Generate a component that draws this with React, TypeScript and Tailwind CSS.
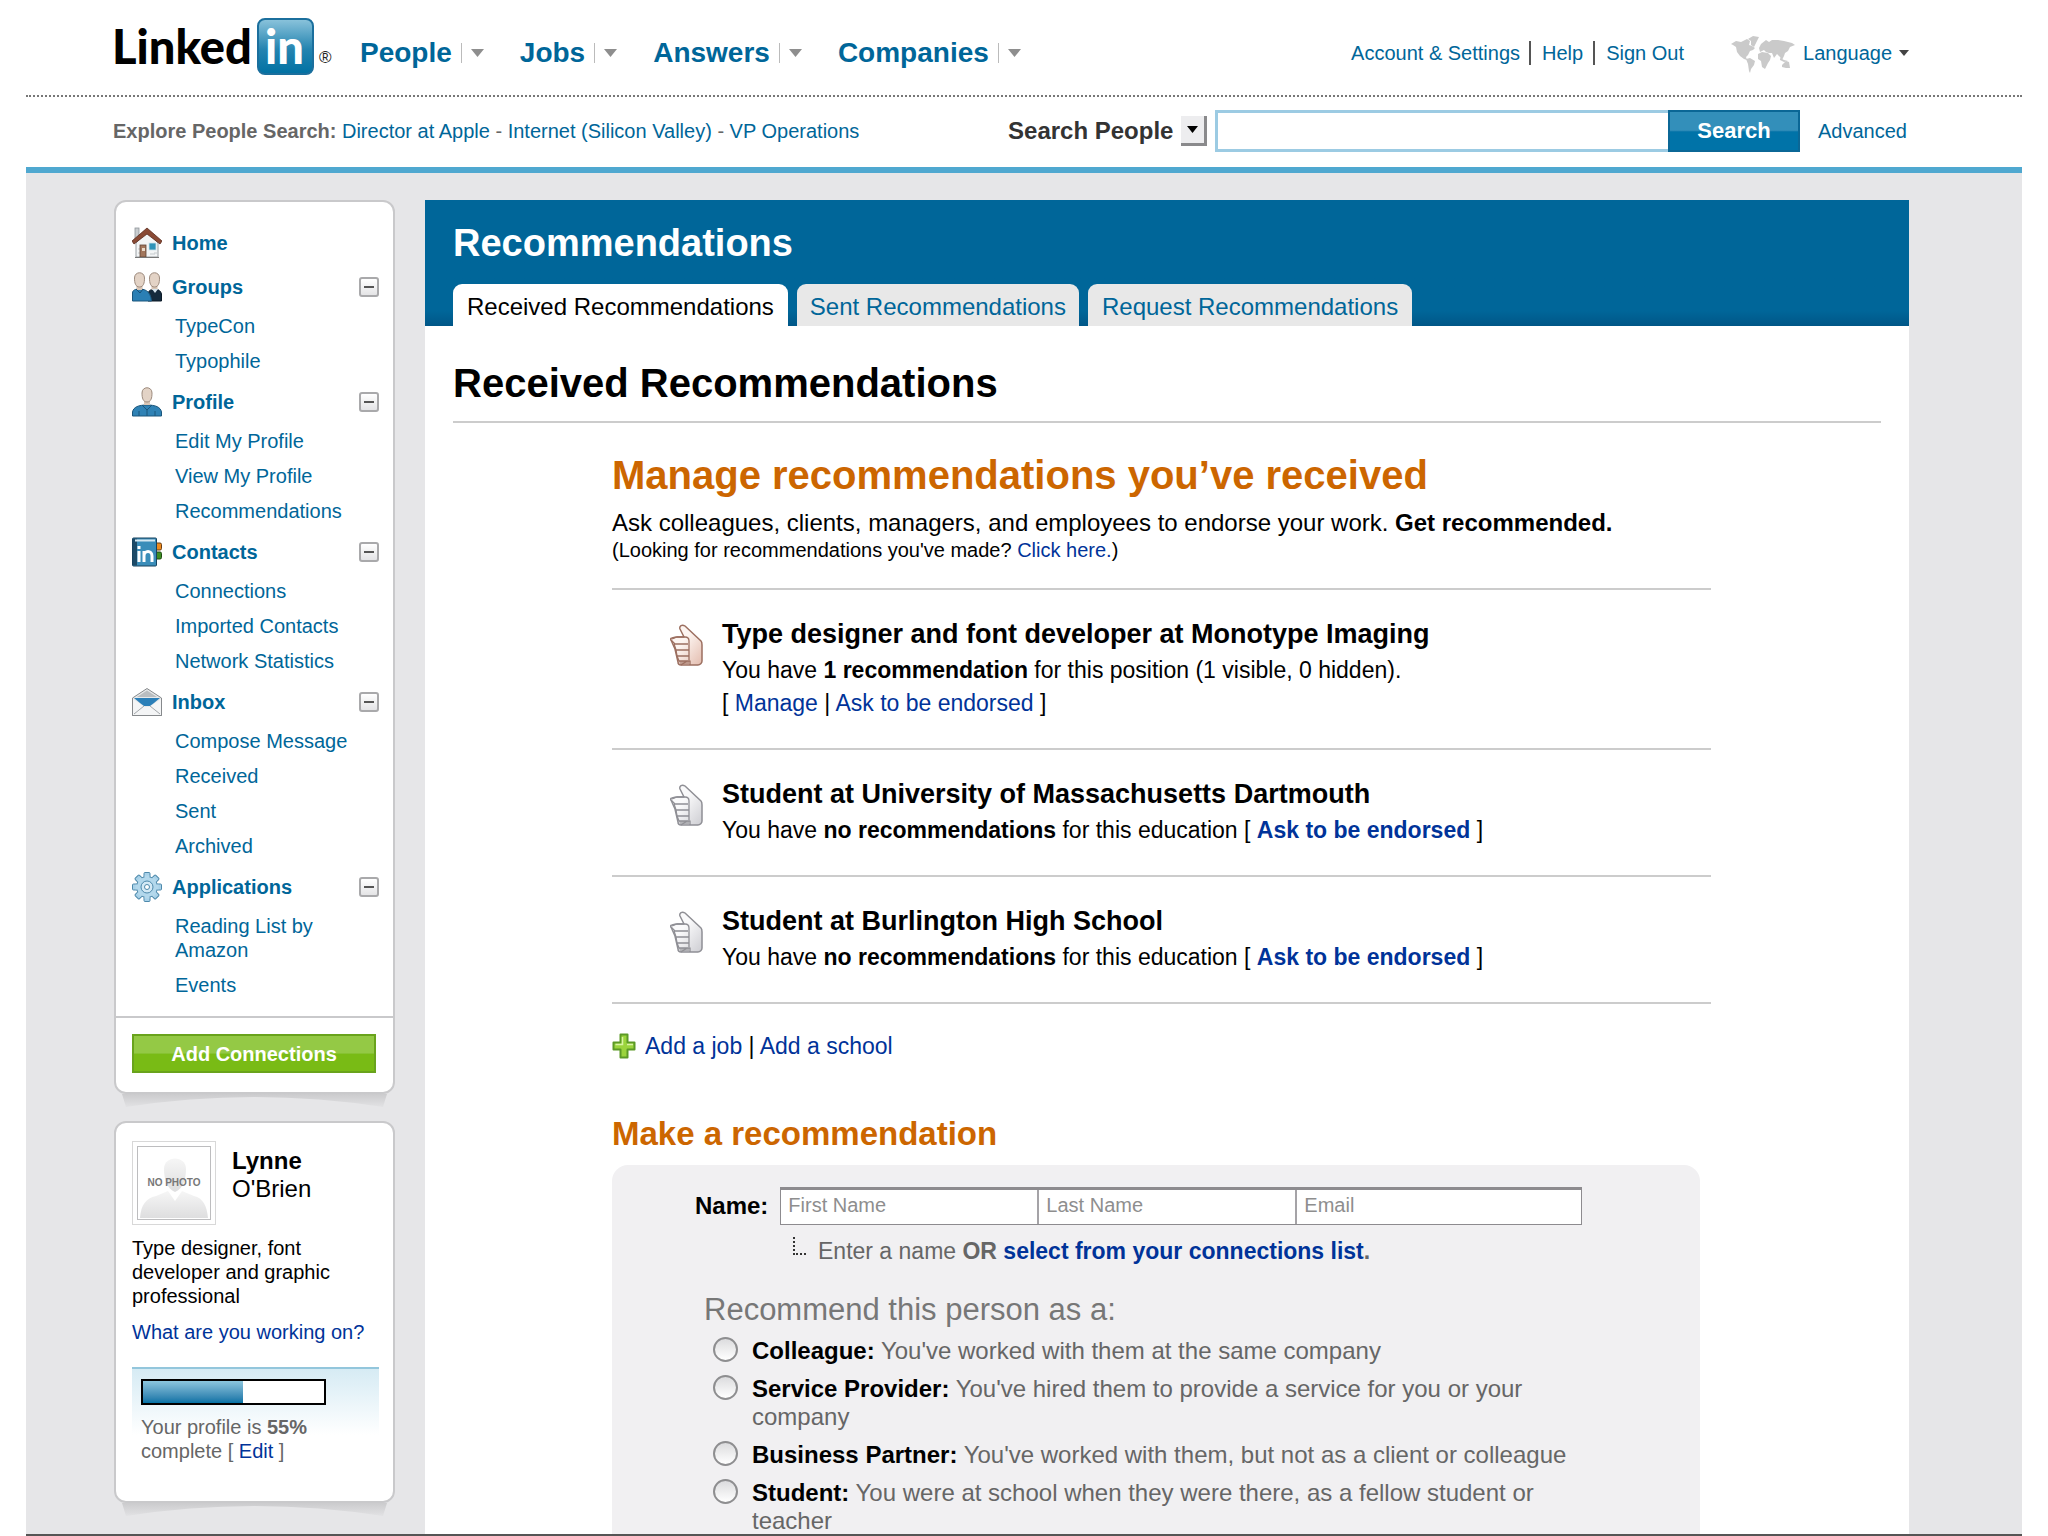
import React from "react";

type NavSection = { title: string; icon: React.ReactNode; items: string[] };

function Logo() {
  return (
    <svg width="226" height="60" viewBox="-4 0 226 60" className="overflow-visible" role="img" aria-label="LinkedIn">
      <defs>
        <linearGradient id="logoBox" x1="0" y1="0" x2="0" y2="1">
          <stop offset="0" stopColor="#8cc4dc" />
          <stop offset="0.55" stopColor="#2484b0" />
          <stop offset="1" stopColor="#0071a3" />
        </linearGradient>
      </defs>
      <text x="-1" y="47" fontFamily="Lato, sans-serif" fontWeight="900" fontSize="47" fill="#000">
        Linked
      </text>
      <rect x="145" y="2" width="55" height="55" rx="7" fill="url(#logoBox)" stroke="#1b6f9d" strokeWidth="2" />
      <text x="152" y="47" fontFamily="Lato, sans-serif" fontWeight="900" fontSize="47" fill="#fff">
        in
      </text>
      <text x="206" y="46" fontFamily="Liberation Sans, sans-serif" fontSize="17" fill="#222">
        ®
      </text>
    </svg>
  );
}

function Caret({ color = "#8e8e8e", w = 13, h = 8 }: { color?: string; w?: number; h?: number }) {
  return (
    <svg width={w} height={h} viewBox="0 0 12 8" preserveAspectRatio="none" aria-hidden="true">
      <path d="M0 0h12L6 8z" fill={color} />
    </svg>
  );
}

function WorldMap() {
  return (
    <svg width="64" height="38" viewBox="0 0 64 38" fill="#cacaca" className="mt-1" aria-hidden="true">
      <path d="M0 8l5-3 5 1 6-3 3 2-1 4 3 1 3 2-2 2-3 1-2 4-2 2 1 3-3-1-4-3-3-4-1-5-3-2z" />
      <path d="M17 3l5-3 6 1-2 4-3 6-3-2 0-4z" />
      <path d="M15 23l4-1 5 3-1 4-3 4-1 4-1-2-1-7z" />
      <path d="M28 12l2-4 5-4 3 2 3-2 6 0 6 1 8 2 3 2-5 2-2 4-3 2-1 3-2 4-2-3-3-3-3 4-2-5-3 0-3-1-2-2-4 2z" />
      <path d="M27 18l4-2 6 1 3 3-1 4-2 3-3 6-3-2-1-6-3-2z" />
      <path d="M51 29l4-4 3 1 1 6-4 0-4-1z" />
      <path d="M49 22l4 2 4 1-4 1-4-2z" />
    </svg>
  );
}

function HomeIcon() {
  return (
    <svg width="30" height="32" viewBox="0 0 30 32" aria-hidden="true">
      <rect x="3" y="1" width="4" height="11" fill="#c9cdd0" stroke="#8f9599" strokeWidth="0.8" />
      <path d="M4 16L15 5l11 11v14H4z" fill="#f3f5f6" stroke="#9aa0a4" strokeWidth="1" />
      <path d="M15 1L0 14l2 3L15 7l13 10 2-3z" fill="#8a4a35" stroke="#5a2c1e" strokeWidth="0.8" />
      <path d="M6 22h4M6 26h3M22 26h3M18 27h5" stroke="#c5cacd" />
      <rect x="8" y="18" width="6" height="12" fill="#a2765c" stroke="#5f4436" strokeWidth="0.8" />
      <rect x="10" y="21" width="3" height="3" fill="#e9d9c9" />
      <rect x="17" y="16" width="7" height="7" fill="#2f93b8" stroke="#cfe3ea" strokeWidth="0.8" />
      <path d="M3 30.500h24" stroke="#777" strokeWidth="1" />
    </svg>
  );
}

function Head({ x }: { x: number }) {
  return (
    <g transform={`translate(${x} 0)`}>
      <rect x="-3" y="10" width="6" height="8" fill="#d9c6b6" />
      <path d="M-5 6c0-7 10-7 10 0 0 5-1 9-5 9s-5-4-5-9z" fill="#e3d3c6" stroke="#9d8b7e" strokeWidth="1" />
    </g>
  );
}

function GroupsIcon() {
  return (
    <svg width="30" height="30" viewBox="0 0 30 30" aria-hidden="true">
      <path d="M16 29v-8c1-3 4-4 7-4s6 2 6.500 5v7z" fill="#152b3d" stroke="#0c1b28" />
      <Head x={22.5} />
      <path d="M20 17l3 4 3-4z" fill="#d7e6ef" />
      <path d="M.5 29v-8c0-3 3-4 7-4s11 1 12 12z" fill="#2a7fb4" stroke="#1a567c" />
      <Head x={7.5} />
      <path d="M4 17l4 4 3-4" fill="none" stroke="#174f77" />
    </svg>
  );
}

function ProfileIcon() {
  return (
    <svg width="30" height="30" viewBox="0 0 30 30" aria-hidden="true">
      <path d="M.5 29v-4c1-5 6-7 14.500-7s13.500 2 14.500 7v4z" fill="#2f82b5" stroke="#1a567c" />
      <Head x={15} />
      <path d="M10 18l5 5 5-5M7 24v5M23 24v5M15 23v6" fill="none" stroke="#1a567c" />
    </svg>
  );
}

function ContactsIcon() {
  return (
    <svg width="30" height="30" viewBox="0 0 30 30" aria-hidden="true">
      <rect x="22" y="6" width="7.500" height="7" rx="1.500" fill="#ee8a1d" stroke="#6b3e12" />
      <rect x="22" y="15" width="7.500" height="7" rx="1.500" fill="#3d8d22" stroke="#1f4b11" />
      <rect x=".5" y="1" width="24" height="28" rx="1" fill="#3a8db9" stroke="#17435f" />
      <rect x="1" y="1.500" width="4" height="27" fill="#1c4a68" />
      <rect x="3" y="2.500" width="20" height="2" fill="#d6e8f1" />
      <path d="M7 14v11M7 9v3M12 25V14M12 19c0-6 8-6 8 0v6" stroke="#fff" strokeWidth="3" fill="none" />
    </svg>
  );
}

function InboxIcon() {
  return (
    <svg width="30" height="30" viewBox="0 0 30 30" aria-hidden="true">
      <path d="M.5 11L15 1.500 29.500 11v17.500H.5z" fill="#e6e8e9" stroke="#86898c" />
      <path d="M5 10L15 3.500 25 10z" fill="#b9bdc0" />
      <path d="M1 12l12 8h4l12-8v16H1z" fill="#f4f5f6" />
      <path d="M2 11h26l-6 5-4 3h-6l-4-3z" fill="#2b7fb8" />
      <path d="M2 27l10-8M28 27l-10-8" stroke="#a3a7aa" fill="none" />
      <path d="M.5 11v17.500h29V11" fill="none" stroke="#86898c" />
    </svg>
  );
}

function AppsIcon() {
  const teeth = [0, 45, 90, 135, 180, 225, 270, 315];
  return (
    <svg width="30" height="30" viewBox="0 0 30 30" aria-hidden="true">
      {teeth.map((a) => (
        <rect key={a} x="12" y="0.500" width="6" height="7" rx="1" fill="#a8d1e8" stroke="#4d89ab" transform={`rotate(${a} 15 15)`} />
      ))}
      <circle cx="15" cy="15" r="10.500" fill="#b3d8ec" stroke="#4d89ab" />
      {teeth.map((a) => (
        <rect key={a} x="12.500" y="3.500" width="5" height="4" fill="#b3d8ec" transform={`rotate(${a} 15 15)`} />
      ))}
      <circle cx="15" cy="15" r="6" fill="#d3e9f5" stroke="#4d89ab" />
      <circle cx="15" cy="15" r="2.500" fill="#fff" stroke="#4d89ab" />
    </svg>
  );
}

function Thumb({ tinted }: { tinted?: boolean }) {
  const id = tinted ? "thumbWarm" : "thumbGray";
  const line = tinted ? "#9c6f60" : "#8f8f95";
  const light = tinted ? "#fdf5f1" : "#fafafb";
  const shade = tinted ? "#e3bcae" : "#cdcdd2";
  return (
    <svg width="33" height="42" viewBox="0 0 33 42" className="shrink-0" aria-hidden="true">
      <defs>
        <linearGradient id={id} x1="0" y1="0" x2="1" y2="1">
          <stop offset="0.4" stopColor={light} />
          <stop offset="1" stopColor={shade} />
        </linearGradient>
      </defs>
      <path
        d="M10 5c-1-3 2-5 5-3l16 15c1 1 1 2 1 4v16c0 2-2 4-4 4H11c-2 0-3-1-3-3L5 25l-4-9c-1-1 0-2 1-2l4-1h8z"
        fill={`url(#${id})`}
        stroke={line}
        strokeWidth="1.500"
        strokeLinejoin="round"
      />
      <path
        d="M2 15l5-2h8c3 0 4 2 4 4v19M1 16l4 4h13M4 20l2 6h13M6 26l1 6h12M7 32l2 5h10M11 41l6-4h3v4"
        fill="none"
        stroke={line}
        strokeWidth="1.300"
        strokeLinejoin="round"
      />
      <path d="M9 37h10v3H10z" fill={line} fillOpacity="0.6" />
    </svg>
  );
}

function PlusIcon() {
  return (
    <svg width="24" height="26" viewBox="0 0 24 26" aria-hidden="true">
      <path d="M8.500 1.500h7v8h7v7h-7v8h-7v-8h-7v-7h7z" fill="#9bd43c" stroke="#5c9a26" strokeWidth="2" strokeLinejoin="round" />
      <path d="M10.500 4v7.500h-7M15 11.500h6" fill="none" stroke="#d9f3a6" strokeWidth="1.500" />
    </svg>
  );
}

function NoPhoto() {
  return (
    <svg width="72" height="72" viewBox="0 0 72 72" role="img" aria-label="No photo">
      <defs>
        <linearGradient id="bust" x1="0" y1="0" x2="0" y2="1">
          <stop offset="0" stopColor="#f6f6f6" />
          <stop offset="1" stopColor="#dededf" />
        </linearGradient>
      </defs>
      <path d="M26 22c0-14 22-14 22 0 0 10-3 20-11 23-8-3-11-13-11-23z" fill="url(#bust)" />
      <path d="M2 71c1-13 6-20 16-22l12-5 7 10 7-10 12 5c9 2 13 10 14 22z" fill="url(#bust)" />
      <text x="36" y="39" textAnchor="middle" fontFamily="Liberation Sans, sans-serif" fontWeight="700" fontSize="10" fill="#777">
        NO PHOTO
      </text>
    </svg>
  );
}

function Card({ children }: { children: React.ReactNode }) {
  return (
    <div className="relative">
      <svg className="absolute inset-x-2 top-full h-[14px] w-[265px]" viewBox="0 0 264 14" preserveAspectRatio="none" aria-hidden="true">
        <defs>
          <linearGradient id="cardShade" x1="0" y1="0" x2="0" y2="1">
            <stop offset="0" stopColor="#cbcbcd" />
            <stop offset="1" stopColor="#e2e2e4" />
          </linearGradient>
        </defs>
        <path d="M0 0h264l-4 13Q132-7 4 13z" fill="url(#cardShade)" />
      </svg>
      <section className="relative rounded-[12px] border-2 border-[#c9c9cb] bg-white">{children}</section>
    </div>
  );
}

const topNav = ["People", "Jobs", "Answers", "Companies"];

const sections: NavSection[] = [
  { title: "Home", icon: <HomeIcon />, items: [] },
  { title: "Groups", icon: <GroupsIcon />, items: ["TypeCon", "Typophile"] },
  { title: "Profile", icon: <ProfileIcon />, items: ["Edit My Profile", "View My Profile", "Recommendations"] },
  { title: "Contacts", icon: <ContactsIcon />, items: ["Connections", "Imported Contacts", "Network Statistics"] },
  { title: "Inbox", icon: <InboxIcon />, items: ["Compose Message", "Received", "Sent", "Archived"] },
  { title: "Applications", icon: <AppsIcon />, items: ["Reading List by Amazon", "Events"] },
];

const relations = [
  { name: "Colleague:", text: "You've worked with them at the same company" },
  { name: "Service Provider:", text: "You've hired them to provide a service for you or your company" },
  { name: "Business Partner:", text: "You've worked with them, but not as a client or colleague" },
  { name: "Student:", text: "You were at school when they were there, as a fellow student or teacher" },
];

function Header() {
  return (
    <header>
      <div className="flex h-[97px] items-center border-b-2 border-dotted border-[#777] pt-[11px] pr-[113px] pl-[83px]">
        <a href="#" className="-mt-[12px] mr-[25px]">
          <Logo />
        </a>
        <nav className="flex gap-9">
          {topNav.map((n) => (
            <div key={n} className="flex items-center">
              <a href="#" className="text-[28px] leading-8 font-bold text-[#006699]">
                {n}
              </a>
              <span className="ml-[9px] h-5 w-px bg-[#bbb]" />
              <button type="button" aria-label={`${n} menu`} className="ml-[9px]">
                <Caret />
              </button>
            </div>
          ))}
        </nav>
        <div className="ml-auto flex items-center text-[20px] leading-6 text-[#006699]">
          <a href="#" className="border-r-2 border-[#555] pr-[9px]">
            Account &amp; Settings
          </a>
          <a href="#" className="border-r-2 border-[#555] pr-[10px] pl-[11px]">
            Help
          </a>
          <a href="#" className="mr-[47px] pl-[11px]">
            Sign Out
          </a>
          <WorldMap />
          <button type="button" className="ml-2 flex items-center gap-[7px]">
            Language <Caret color="#444" w={10} h={6} />
          </button>
        </div>
      </div>
      <div className="flex h-[76px] items-center border-b-6 border-[#4fa8d0] pr-[115px] pb-[2px] pl-[87px] text-[20px] leading-6">
        <p className="text-[#666]">
          <b>Explore People Search:</b>{" "}
          <a href="#" className="text-[#006699]">
            Director at Apple
          </a>{" "}
          -{" "}
          <a href="#" className="text-[#006699]">
            Internet (Silicon Valley)
          </a>{" "}
          -{" "}
          <a href="#" className="text-[#006699]">
            VP Operations
          </a>
        </p>
        <form className="ml-auto flex items-center" onSubmit={(e) => e.preventDefault()}>
          <div className="relative mr-2">
            <select aria-label="Search type" className="block appearance-none bg-transparent pr-[33px] text-[24px] leading-[30px] font-bold text-[#333]">
              <option>Search People</option>
            </select>
            <span className="pointer-events-none absolute top-0 right-0 flex h-[30px] w-[26px] items-center justify-center border-r-3 border-b-3 border-[#8a8a8c] bg-[#ededef]">
              <Caret color="#000" w={11} h={7} />
            </span>
          </div>
          <input aria-label="Search people" className="h-[42px] w-[453px] border-3 border-r-0 border-[#9ccbe3] bg-white px-2 outline-none" />
          <button type="submit" className="mr-[18px] h-[42px] w-[132px] border-2 border-[#0b6796] bg-linear-to-b from-[#338fba] from-48% to-[#0073a8] to-52% text-[22px] font-bold text-white">
            Search
          </button>
          <a href="#" className="text-[#006699]">
            Advanced
          </a>
        </form>
      </div>
    </header>
  );
}

function Sidebar() {
  return (
    <aside className="flex w-[281px] shrink-0 flex-col gap-[27px] text-[20px] leading-6">
      <Card>
        <nav className="flex flex-col gap-[14px] pt-[26px] pr-[14px] pb-[19px] pl-4 text-[#006699]">
          {sections.map((s) => (
            <div key={s.title}>
              <div className="flex h-[30px] items-center">
                {s.icon}
                <a href="#" className="ml-[10px] font-bold">
                  {s.title}
                </a>
                {s.items.length > 0 && (
                  <button
                    type="button"
                    aria-label={`Collapse ${s.title}`}
                    className="ml-auto flex size-5 items-center justify-center rounded-[3px] border-2 border-[#a9a9ab] bg-linear-to-b from-white to-[#e4e4e6]"
                  >
                    <span className="h-[2px] w-[10px] bg-[#555]" />
                  </button>
                )}
              </div>
              {s.items.length > 0 && (
                <ul className="mt-3 ml-[43px] flex w-[180px] flex-col gap-[11px]">
                  {s.items.map((i) => (
                    <li key={i}>
                      <a href="#" className="block">
                        {i}
                      </a>
                    </li>
                  ))}
                </ul>
              )}
            </div>
          ))}
        </nav>
        <div className="border-t-2 border-[#c9c9cb] pt-[16px] pb-[19px] pl-4">
          <button type="button" className="block h-[39px] w-[244px] border-2 border-[#69a31c] bg-linear-to-b from-[#94c945] from-48% to-[#79bb15] to-52% font-bold text-white">
            Add Connections
          </button>
        </div>
      </Card>
      <Card>
        <div className="pt-[18px] pr-[14px] pb-[38px] pl-4">
          <div className="flex gap-4">
            <div className="size-[84px] border border-[#d8d8d8] p-[4px]">
              <div className="border border-[#bdbdbf]">
                <NoPhoto />
              </div>
            </div>
            <p className="pt-[6px] text-[24px] leading-7">
              <b>Lynne</b>
              <br />
              O'Brien
            </p>
          </div>
          <p className="mt-[11px]">Type designer, font developer and graphic professional</p>
          <a href="#" className="mt-3 block whitespace-nowrap text-[#003399]">
            What are you working on?
          </a>
          <div className="mt-[23px] border-t-2 border-[#93c6dc] bg-linear-to-b from-[#d6ebf4] to-white to-70% px-[9px] pt-[10px] text-[#666]">
            <div className="h-[26px] w-[185px] border-2 border-black bg-white" role="progressbar" aria-label="Profile completeness" aria-valuenow={55}>
              <div className="h-full w-[55%] bg-linear-to-b from-[#8cc6dd] to-[#0072a5]" />
            </div>
            <p className="mt-[10px]">
              Your profile is <b>55%</b>
              <br />
              complete [{" "}
              <a href="#" className="text-[#003399]">
                Edit
              </a>{" "}
              ]
            </p>
          </div>
        </div>
      </Card>
    </aside>
  );
}

function Position({ title, tinted, children }: { title: string; tinted?: boolean; children: React.ReactNode }) {
  return (
    <li className="flex gap-[19px] border-t-2 border-[#ccc] pt-[28px] pb-[28px] pl-[58px]">
      <div className="mt-[6px]">
        <Thumb tinted={tinted} />
      </div>
      <div>
        <h3 className="text-[27px] leading-8 font-bold">{title}</h3>
        <div className="mt-1">{children}</div>
      </div>
    </li>
  );
}

function RecommendForm() {
  return (
    <form className="mr-[11px] rounded-t-[16px] bg-[#f1f0f2] pt-[22px] pr-[118px] pl-[83px]" onSubmit={(e) => e.preventDefault()}>
      <div className="flex items-center gap-3">
        <label htmlFor="first" className="text-[24px] font-bold">
          Name:
        </label>
        <div className="flex h-[38px] flex-1 border border-t-3 border-[#8d8b8f] text-[20px]">
          <input id="first" placeholder="First Name" className="w-[258px] border-r-2 border-[#a5a3a7] bg-white px-[7px] pb-1 outline-none placeholder:text-[#8e8e8e]" />
          <input aria-label="Last name" placeholder="Last Name" className="w-[258px] border-r-2 border-[#a5a3a7] bg-white px-[7px] pb-1 outline-none placeholder:text-[#8e8e8e]" />
          <input aria-label="Email" placeholder="Email" className="min-w-0 flex-1 bg-white px-[7px] pb-1 outline-none placeholder:text-[#8e8e8e]" />
        </div>
      </div>
      <div className="mt-3 ml-[98px] flex gap-[12px] text-[#666]">
        <span className="h-[18px] w-[13px] border-b-2 border-l-2 border-dotted border-[#333]" />
        <p className="leading-7">
          Enter a name <b>OR</b>{" "}
          <a href="#" className="font-bold text-[#003399]">
            select from your connections list
          </a>
          <b>.</b>
        </p>
      </div>
      <fieldset className="mt-[27px] ml-[9px]">
        <legend className="text-[31px] leading-9 text-[#777]">Recommend this person as a:</legend>
        <div className="mt-[9px] ml-[9px] flex flex-col gap-[10px] text-[24px] leading-7">
          {relations.map((r) => (
            <label key={r.name} className="flex gap-[14px] text-[#666]">
              <input
                type="radio"
                name="relation"
                className="size-[25px] shrink-0 appearance-none rounded-full border-2 border-[#8e8e90] bg-linear-to-b from-[#dcdcde] to-white"
              />
              <span>
                <b className="text-black">{r.name}</b> {r.text}
              </span>
            </label>
          ))}
        </div>
      </fieldset>
    </form>
  );
}

function Main() {
  return (
    <main className="min-w-0 flex-1 bg-white">
      <div className="bg-linear-to-b from-[#006699] from-88% to-[#005687] px-7">
        <h1 className="pt-[20px] text-[38px] leading-[46px] font-bold text-white">Recommendations</h1>
        <div role="tablist" className="mt-[18px] flex gap-[9px] text-[24px] leading-[38px]">
          <button role="tab" aria-selected="true" type="button" className="rounded-t-[9px] bg-white px-[14px] pt-1">
            Received Recommendations
          </button>
          <button role="tab" aria-selected="false" type="button" className="rounded-t-[9px] bg-[#e8e8e8] px-[13px] pt-1 text-[#006699]">
            Sent Recommendations
          </button>
          <button role="tab" aria-selected="false" type="button" className="rounded-t-[9px] bg-[#e8e8e8] px-[14px] pt-1 text-[#006699]">
            Request Recommendations
          </button>
        </div>
      </div>
      <div className="px-7 pt-[33px]">
        <h2 className="border-b-2 border-[#ccc] pb-[14px] text-[40px] leading-[48px] font-bold">Received Recommendations</h2>
        <div className="mr-[170px] ml-[159px] pt-[28px] text-[23px]">
          <h2 className="text-[40px] leading-[48px] font-bold text-[#cc6600]">Manage recommendations you’ve received</h2>
          <p className="mt-[10px] text-[24px] leading-7">
            Ask colleagues, clients, managers, and employees to endorse your work. <b>Get recommended.</b>
          </p>
          <p className="text-[20px] leading-[26px]">
            (Looking for recommendations you've made?{" "}
            <a href="#" className="text-[#003399]">
              Click here.
            </a>
            )
          </p>
          <ul className="mt-[25px] border-b-2 border-[#ccc] leading-[33px]">
            <Position title="Type designer and font developer at Monotype Imaging" tinted>
              <p>
                You have <b>1 recommendation</b> for this position (1 visible, 0 hidden).
              </p>
              <p>
                [{" "}
                <a href="#" className="text-[#003399]">
                  Manage
                </a>{" "}
                |{" "}
                <a href="#" className="text-[#003399]">
                  Ask to be endorsed
                </a>{" "}
                ]
              </p>
            </Position>
            {["Student at University of Massachusetts Dartmouth", "Student at Burlington High School"].map((t) => (
              <Position key={t} title={t}>
                <p>
                  You have <b>no recommendations</b> for this education [{" "}
                  <a href="#" className="font-bold text-[#003399]">
                    Ask to be endorsed
                  </a>{" "}
                  ]
                </p>
              </Position>
            ))}
          </ul>
          <div className="mt-7 flex items-center gap-[9px] leading-7">
            <PlusIcon />
            <p>
              <a href="#" className="text-[#003399]">
                Add a job
              </a>{" "}
              |{" "}
              <a href="#" className="text-[#003399]">
                Add a school
              </a>
            </p>
          </div>
          <h2 className="mt-[54px] mb-[11px] text-[33px] leading-10 font-bold text-[#cc6600]">Make a recommendation</h2>
          <RecommendForm />
        </div>
      </div>
    </main>
  );
}

export default function App() {
  return (
    <div className="h-screen overflow-hidden bg-white px-[26px] font-['Liberation_Sans',Arial,sans-serif] text-black">
      <div className="flex h-full flex-col overflow-hidden border-b-2 border-[#555]">
        <Header />
        <div className="flex min-h-0 flex-1 items-start gap-[30px] overflow-hidden bg-[#e6e6e8] pt-[27px] pr-[113px] pl-[88px]">
          <Sidebar />
          <Main />
        </div>
      </div>
    </div>
  );
}
